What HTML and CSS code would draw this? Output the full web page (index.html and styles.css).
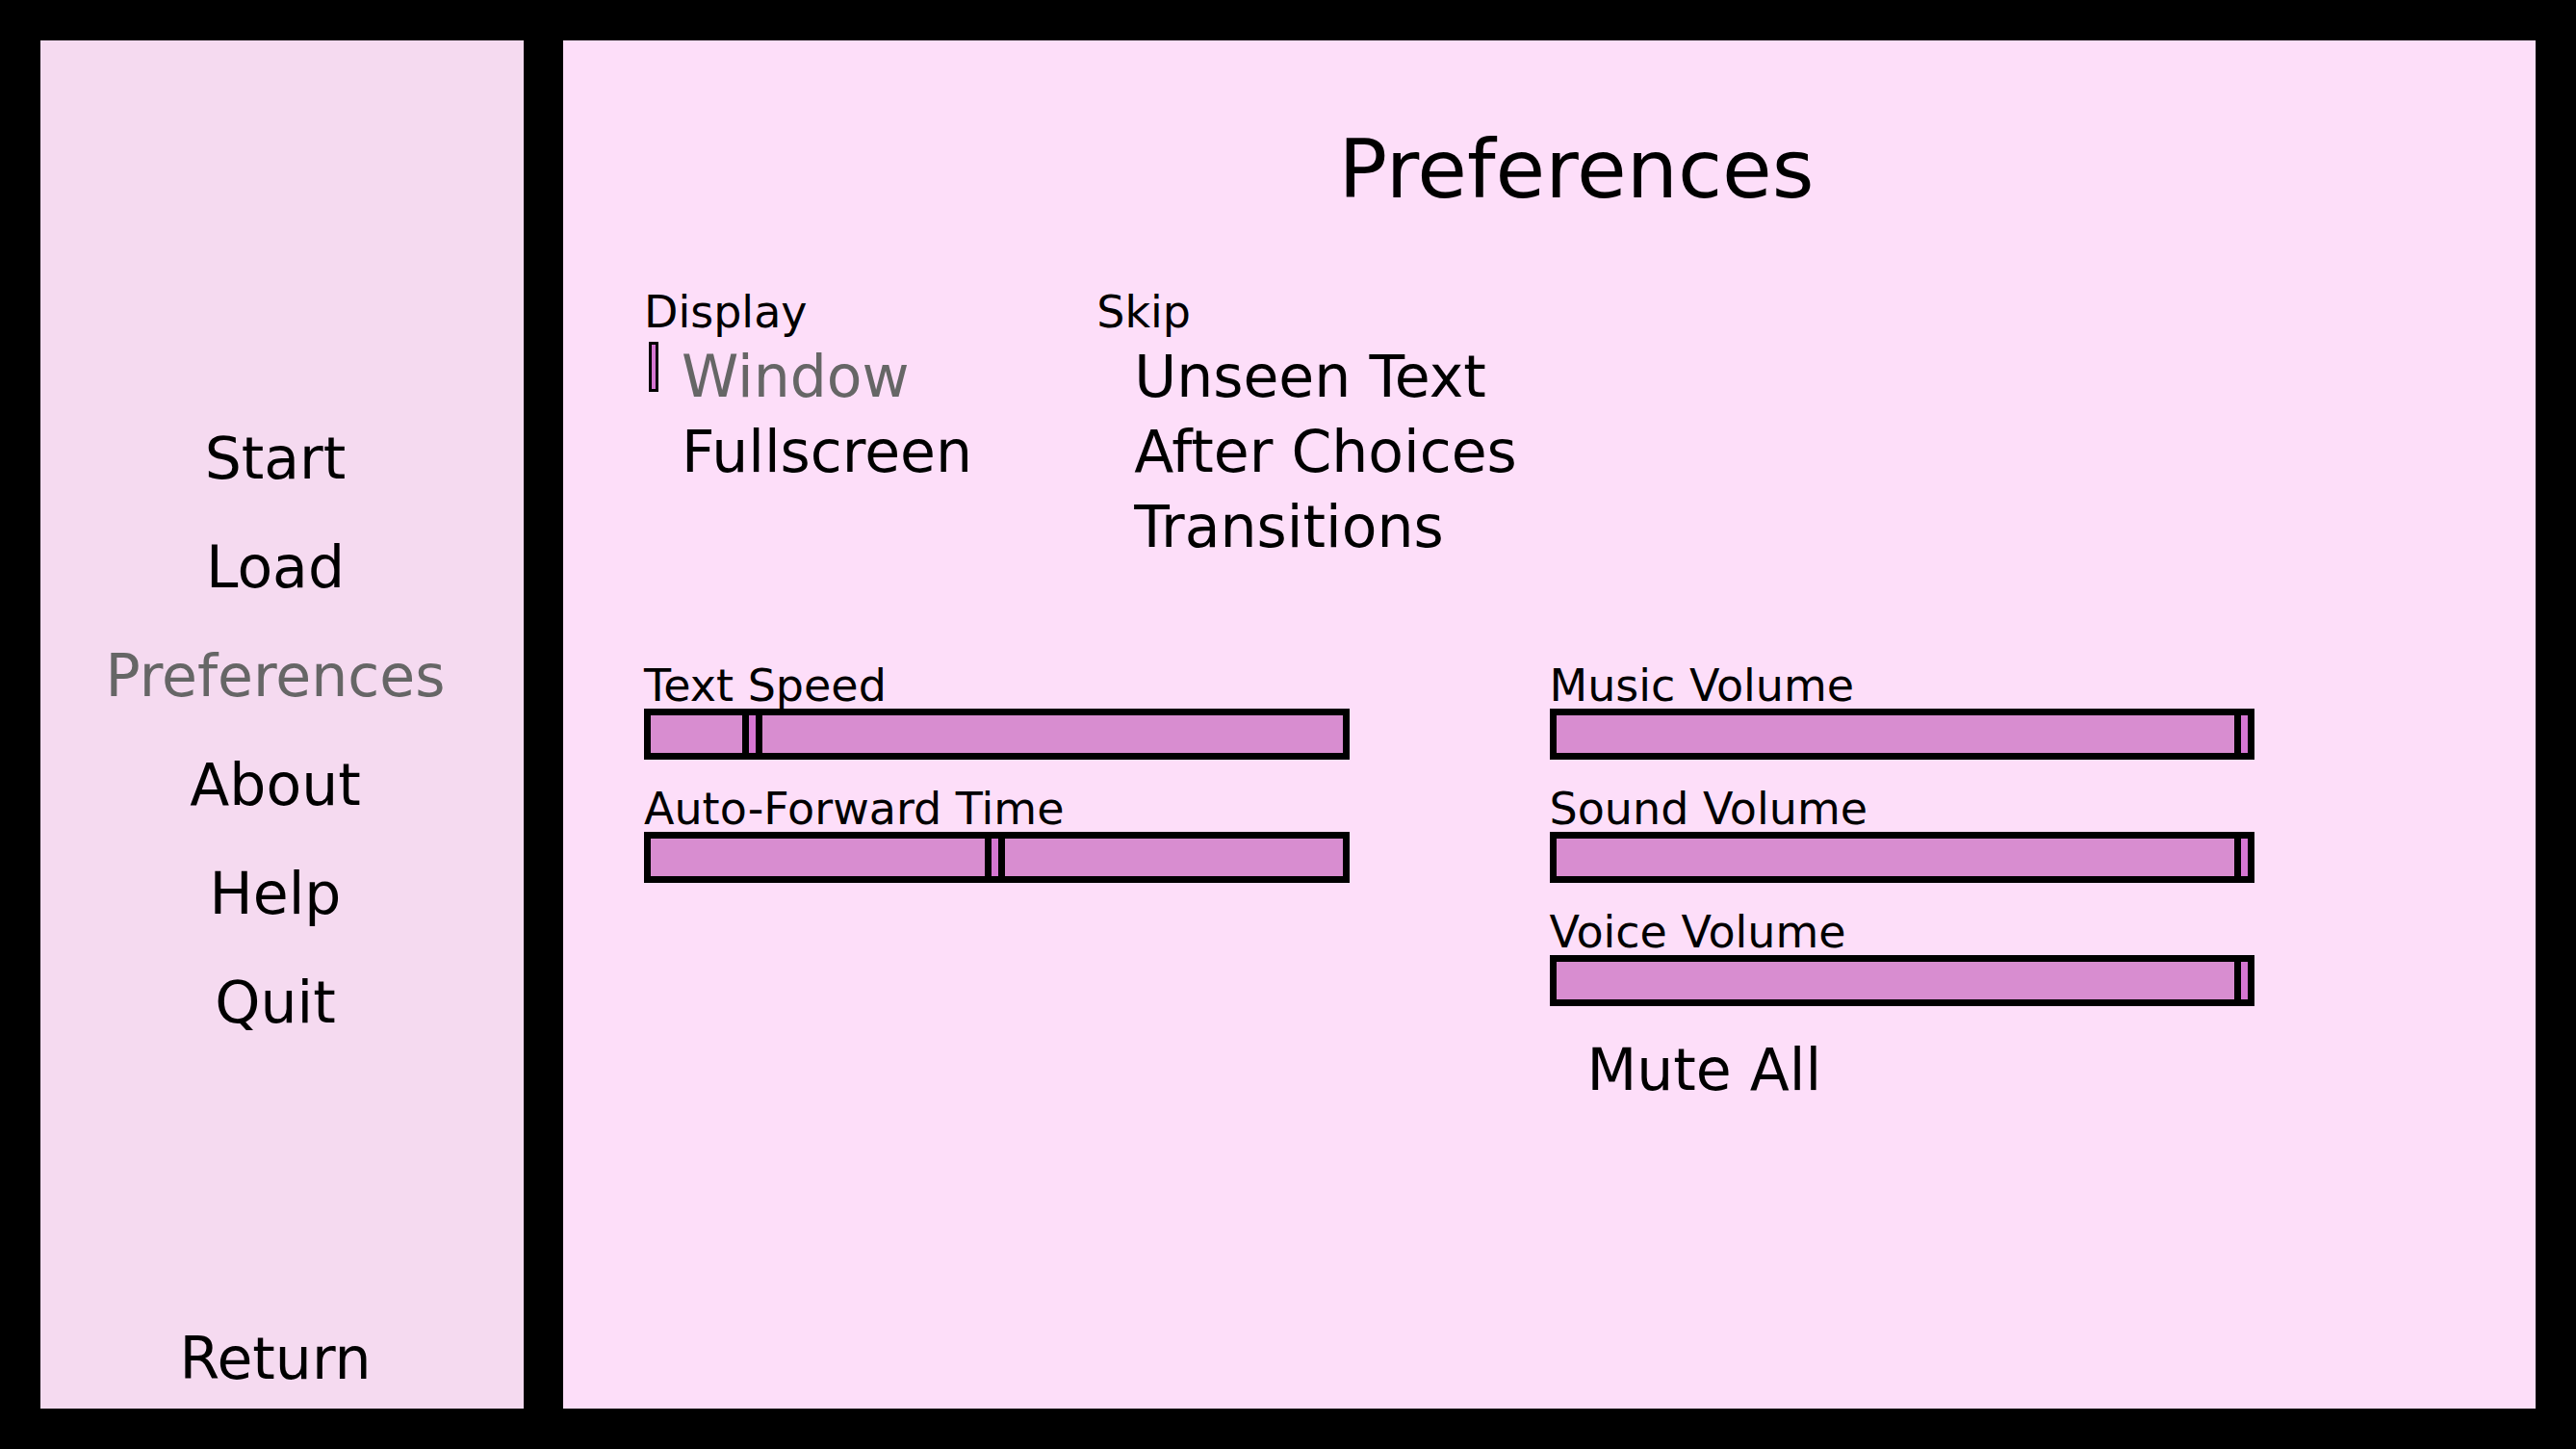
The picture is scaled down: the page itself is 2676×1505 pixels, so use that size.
FILE: index.html
```html
<!DOCTYPE html>
<html lang="en">
  <head>
    <meta charset="utf-8" />
    <title>Preferences</title>
    <link rel="stylesheet" href="styles.css">
  </head>
  <body>
    <aside class="sidebar">
      <nav class="menu">
        <button type="button">Start</button>
        <button type="button">Load</button>
        <button type="button" class="selected">Preferences</button>
        <button type="button">About</button>
        <button type="button">Help</button>
        <button type="button">Quit</button>
      </nav>
      <button type="button" class="return">Return</button>
    </aside>
    <main>
      <h1>Preferences</h1>
      <form>
        <div class="choices">
          <fieldset>
            <legend>Display</legend>
            <label class="option"><input type="radio" name="display" checked /><span>Window</span></label>
            <label class="option"><input type="radio" name="display" /><span>Fullscreen</span></label>
          </fieldset>
          <fieldset>
            <legend>Skip</legend>
            <label class="option"><input type="checkbox" name="unseen" /><span>Unseen Text</span></label>
            <label class="option"><input type="checkbox" name="after" /><span>After Choices</span></label>
            <label class="option"><input type="checkbox" name="transitions" /><span>Transitions</span></label>
          </fieldset>
        </div>
        <div class="sliders">
          <div class="column">
            <div class="slider">
              <label for="text-speed">Text Speed</label>
              <input type="range" id="text-speed" min="0" max="1000" value="144" />
            </div>
            <div class="slider">
              <label for="auto-time">Auto-Forward Time</label>
              <input type="range" id="auto-time" min="0" max="1000" value="498" />
            </div>
          </div>
          <div class="column">
            <div class="slider">
              <label for="music">Music Volume</label>
              <input type="range" id="music" min="0" max="1000" value="1000" />
            </div>
            <div class="slider">
              <label for="sound">Sound Volume</label>
              <input type="range" id="sound" min="0" max="1000" value="1000" />
            </div>
            <div class="slider">
              <label for="voice">Voice Volume</label>
              <input type="range" id="voice" min="0" max="1000" value="1000" />
            </div>
            <label class="option"><input type="checkbox" name="mute" /><span>Mute All</span></label>
          </div>
        </div>
      </form>
    </main>
  </body>
</html>
```

FILE: styles.css
```css
* {
  box-sizing: border-box;
  margin: 0;
  padding: 0;
}
body {
  display: flex;
  gap: 41px;
  min-height: 100vh;
  padding: 42px;
  background-color: #000;
  color: #000;
  font-family: "DejaVu Sans", sans-serif;
  font-size: 60px;
}

/* left menu */
.sidebar {
  display: flex;
  flex-direction: column;
  flex: 0 0 502px;
  padding: 0 14px 18px 0;
  background-color: #f5daf0;
}
.menu {
  display: flex;
  flex: 1;
  flex-direction: column;
  justify-content: center;
  padding-top: 98px;
}
button {
  border: none;
  background: none;
  color: #000;
  font: inherit;
  line-height: 113px;
  cursor: pointer;
}
button:hover {
  color: #666;
}
.selected {
  color: #666;
}
.return {
  line-height: 67px;
}

/* preferences */
main {
  flex: 1;
  padding: 82px 84px;
  background-color: #fddef9;
}
h1 {
  margin-bottom: 68px;
  padding-left: 56px;
  font-size: 84px;
  font-weight: normal;
  line-height: 104px;
  text-align: center;
}
.choices {
  display: grid;
  grid-template-columns: repeat(4, 1fr);
  margin-bottom: 102px;
}
fieldset {
  min-width: 0;
  border: none;
  white-space: nowrap;
}
legend {
  font-size: 46px;
  line-height: 56px;
}
.option {
  display: flex;
  align-items: flex-start;
  gap: 24px;
  padding-left: 5px;
  line-height: 78px;
  cursor: pointer;
}
.option input {
  appearance: none;
  width: 10px;
  height: 52px;
  margin-top: 3px;
}
.option input:checked {
  border: 3px solid #000;
  background-color: #d576d2;
}
.option input[type="radio"]:checked + span {
  color: #666;
}
.sliders {
  display: grid;
  grid-template-columns: repeat(2, 1fr);
}
.column {
  display: flex;
  flex-direction: column;
  gap: 27px;
  padding-right: 208px;
}
.slider label {
  display: block;
  font-size: 46px;
  line-height: 48px;
}
.slider input {
  appearance: none;
  display: block;
  width: 100%;
  height: 53px;
  background-color: #d88dd0;
  box-shadow: inset 0 0 0 7px #000;
}
.slider input::-webkit-slider-thumb {
  appearance: none;
  width: 21px;
  height: 53px;
  border: 7px solid #000;
  background-color: #d576d2;
}
```
